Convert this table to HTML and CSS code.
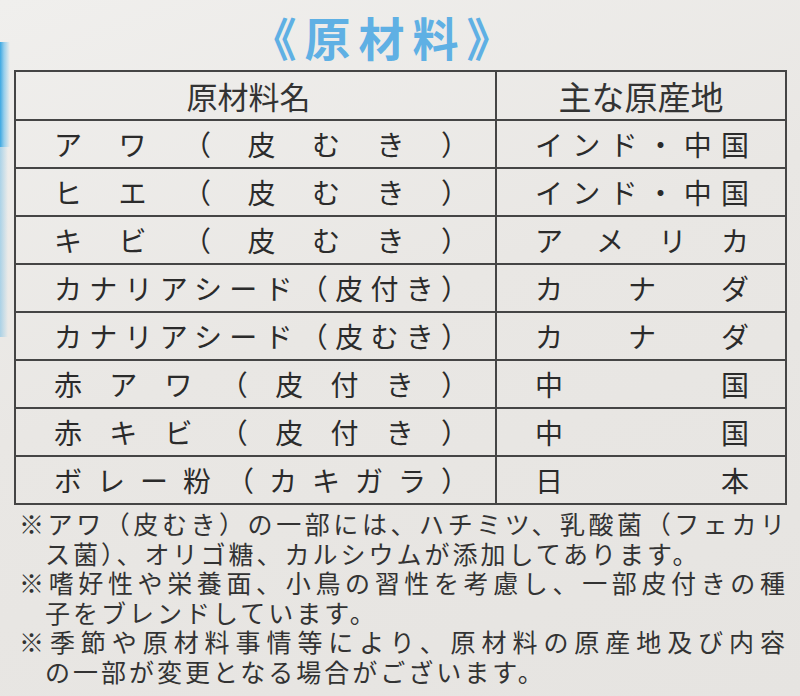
FILE: index.html
```html
<!DOCTYPE html>
<html lang="ja">
<head>
<meta charset="utf-8">
<title>原材料</title>
<link rel="stylesheet" href="styles.css">
</head>
<body>
<div class="page">
  <h1 class="title">《原材料》</h1>
  <table class="materials">
    <colgroup><col class="c-name"><col class="c-origin"></colgroup>
    <thead>
      <tr><th class="h-name">原材料名</th><th class="h-origin">主な原産地</th></tr>
    </thead>
    <tbody>
      <tr><td>アワ（皮むき）</td><td>インド・中国</td></tr>
      <tr><td>ヒエ（皮むき）</td><td>インド・中国</td></tr>
      <tr><td>キビ（皮むき）</td><td>アメリカ</td></tr>
      <tr><td>カナリアシード（皮付き）</td><td>カナダ</td></tr>
      <tr><td>カナリアシード（皮むき）</td><td>カナダ</td></tr>
      <tr><td>赤アワ（皮付き）</td><td>中国</td></tr>
      <tr><td>赤キビ（皮付き）</td><td>中国</td></tr>
      <tr><td>ボレー粉（カキガラ）</td><td>日本</td></tr>
    </tbody>
  </table>
  <div class="notes">
    <p class="note"><span class="line full">※アワ（皮むき）の一部には、ハチミツ、乳酸菌（フェカリ</span><span class="line cont">ス菌）、オリゴ糖、カルシウムが添加してあります。</span></p>
    <p class="note"><span class="line full">※嗜好性や栄養面、小鳥の習性を考慮し、一部皮付きの種</span><span class="line cont">子をブレンドしています。</span></p>
    <p class="note"><span class="line full">※季節や原材料事情等により、原材料の原産地及び内容</span><span class="line cont">の一部が変更となる場合がございます。</span></p>
  </div>
</div>
</body>
</html>
```
FILE: styles.css
```css
html, body {
  margin: 0;
  padding: 0;
}
body {
  width: 800px;
  height: 696px;
  overflow: hidden;
  font-family: "Noto Sans CJK JP", "Noto Sans", sans-serif;
  color: #2b2b2b;
  background:
    linear-gradient(to right, rgba(40,160,225,0.9) 0, rgba(90,185,235,0.6) 4px, rgba(200,225,240,0) 10px) no-repeat 0 42px / 12px 105px,
    linear-gradient(to right, rgba(90,180,230,0.45) 0, rgba(200,225,240,0) 8px) no-repeat 0 147px / 10px 190px,
    linear-gradient(160deg, #f0efed 0%, #e9e7e4 45%, #e6e4e1 100%);
}
.page {
  padding: 0 15px 0 14px;
}
.title {
  margin: 0;
  height: 70px;
  box-sizing: border-box;
  padding: 10px 28px 0 0;
  text-align: center;
  font-size: 46px;
  line-height: 52px;
  font-weight: 700;
  letter-spacing: 8px;
  color: #5fb0e4;
}
.materials {
  width: 771px;
  border-collapse: collapse;
  table-layout: fixed;
  border: 2px solid #3c3c3c;
}
.c-name { width: 481px; }
.c-origin { width: 290px; }
.materials th,
.materials td {
  border: 2px solid #454545;
  font-size: 28px;
  line-height: 30px;
  padding: 0;
  font-weight: 400;
}
.materials th {
  height: 47px;
  text-align: center;
  color: #333;
}
.materials th.h-name {
  font-size: 31px;
  padding-right: 14px;
}
.materials th.h-origin {
  font-size: 33px;
}
.materials td {
  height: 46px;
  text-align: justify;
  text-align-last: justify;
  text-justify: inter-character;
}
.materials td:first-child {
  padding: 0 26px 0 38px;
}
.materials td:last-child {
  padding: 0 36px 0 38px;
}
.notes {
  margin-top: 4px;
  width: 771px;
}
.note {
  margin: 0;
  font-size: 25px;
  line-height: 29.5px;
  color: #333;
}
.line {
  display: block;
  white-space: nowrap;
}
.line.full {
  padding-left: 5px;
  text-align: justify;
  text-align-last: justify;
  text-justify: inter-character;
}
.line.cont {
  padding-left: 31px;
  letter-spacing: 3px;
}
```
